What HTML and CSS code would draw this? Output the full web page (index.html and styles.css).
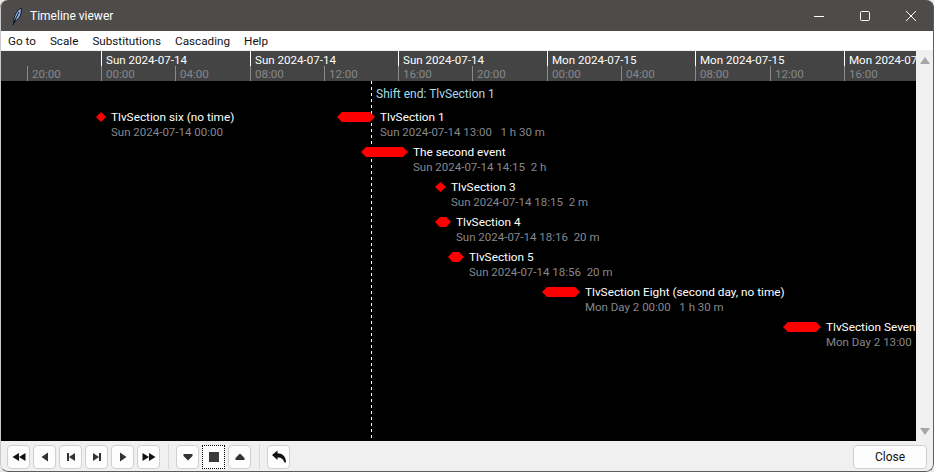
FILE: index.html
```html
<!DOCTYPE html>
<html lang="en">
<head>
<meta charset="UTF-8">
<meta name="viewport" content="width=device-width, initial-scale=1.0">
<title>Timeline viewer</title>
<link rel="stylesheet" href="styles.css">
</head>
<body>
<div class="window">
    <div class="titlebar">
        <svg class="app-icon" width="16" height="20" viewBox="0 0 16 20">
            <path d="M5 17 C4 12 7 5 12 2 C13 7 11 13 6 15 Z" fill="#8fb8ee" stroke="#10141c" stroke-width="1"/>
            <path d="M4 19 L6.5 13 L10 6" fill="none" stroke="#0b0d12" stroke-width="1"/>
        </svg>
        <span class="title">Timeline viewer</span>
        <div class="winbuttons">
            <svg width="12" height="12" viewBox="0 0 12 12"><path d="M1 6.5 H11" stroke="#fff" stroke-width="1"/></svg>
            <svg width="12" height="12" viewBox="0 0 12 12"><rect x="1.5" y="1.5" width="9" height="9" rx="1" fill="none" stroke="#fff" stroke-width="1"/></svg>
            <svg width="12" height="12" viewBox="0 0 12 12"><path d="M1 1 L11 11 M11 1 L1 11" stroke="#fff" stroke-width="1"/></svg>
        </div>
    </div>

    <div class="menubar">
        <span>Go to</span>
        <span>Scale</span>
        <span>Substitutions</span>
        <span>Cascading</span>
        <span>Help</span>
    </div>

    <div class="main">
        <div class="viewer">
            <div class="ruler">
                <div class="tick" style="left: 27px"><span>20:00</span></div>
                <div class="tick" style="left: 101px"><b>Sun 2024-07-14</b><span>00:00</span></div>
                <div class="tick" style="left: 175px"><span>04:00</span></div>
                <div class="tick" style="left: 250px"><b>Sun 2024-07-14</b><span>08:00</span></div>
                <div class="tick" style="left: 324px"><span>12:00</span></div>
                <div class="tick" style="left: 398px"><b>Sun 2024-07-14</b><span>16:00</span></div>
                <div class="tick" style="left: 472px"><span>20:00</span></div>
                <div class="tick" style="left: 547px"><b>Mon 2024-07-15</b><span>00:00</span></div>
                <div class="tick" style="left: 621px"><span>04:00</span></div>
                <div class="tick" style="left: 695px"><b>Mon 2024-07-15</b><span>08:00</span></div>
                <div class="tick" style="left: 770px"><span>12:00</span></div>
                <div class="tick" style="left: 844px"><b>Mon 2024-07-15</b><span>16:00</span></div>
            </div>
            <div class="canvas">
                <div class="now-line"></div>
                <div class="shift-label">Shift end: TlvSection 1</div>

                <div class="event" style="left: 96px; top: 28px">
                    <i class="mark" style="width: 10px"></i>
                    <div class="text"><p>TlvSection six (no time)</p><small>Sun 2024-07-14 00:00</small></div>
                </div>
                <div class="event" style="left: 337px; top: 28px">
                    <i class="mark long" style="width: 38px"></i>
                    <div class="text"><p>TlvSection 1</p><small>Sun 2024-07-14 13:00 &nbsp; 1 h 30 m</small></div>
                </div>
                <div class="event" style="left: 361px; top: 63px">
                    <i class="mark long" style="width: 47px"></i>
                    <div class="text"><p>The second event</p><small>Sun 2024-07-14 14:15 &nbsp;2 h</small></div>
                </div>
                <div class="event" style="left: 435px; top: 98px">
                    <i class="mark" style="width: 11px"></i>
                    <div class="text"><p>TlvSection 3</p><small>Sun 2024-07-14 18:15 &nbsp;2 m</small></div>
                </div>
                <div class="event" style="left: 435px; top: 133px">
                    <i class="mark mid" style="width: 16px"></i>
                    <div class="text"><p>TlvSection 4</p><small>Sun 2024-07-14 18:16 &nbsp;20 m</small></div>
                </div>
                <div class="event" style="left: 448px; top: 168px">
                    <i class="mark mid" style="width: 16px"></i>
                    <div class="text"><p>TlvSection 5</p><small>Sun 2024-07-14 18:56 &nbsp;20 m</small></div>
                </div>
                <div class="event" style="left: 542px; top: 203px">
                    <i class="mark long" style="width: 38px"></i>
                    <div class="text"><p>TlvSection Eight (second day, no time)</p><small>Mon Day 2 00:00 &nbsp; 1 h 30 m</small></div>
                </div>
                <div class="event" style="left: 783px; top: 238px">
                    <i class="mark long" style="width: 38px"></i>
                    <div class="text"><p>TlvSection Seven</p><small>Mon Day 2 13:00</small></div>
                </div>
            </div>
        </div>
        <div class="scrollbar">
            <svg width="10" height="7" viewBox="0 0 10 7"><path d="M5 0 L10 7 H0 Z" fill="#a6a6a6"/></svg>
            <svg width="10" height="7" viewBox="0 0 10 7"><path d="M0 0 H10 L5 7 Z" fill="#a6a6a6"/></svg>
        </div>
    </div>

    <div class="toolbar">
        <div class="tools">
            <button class="tool"><svg width="16" height="16" viewBox="0 0 16 16"><path d="M8 4 V12 L1.5 8 Z M14.5 4 V12 L8 8 Z" fill="#111"/></svg></button>
            <button class="tool"><svg width="16" height="16" viewBox="0 0 16 16"><path d="M11 3.5 V12.5 L4.5 8 Z" fill="#333"/></svg></button>
            <button class="tool"><svg width="16" height="16" viewBox="0 0 16 16"><path d="M4 4 H6 V12 H4 Z M12 4 V12 L6 8 Z" fill="#333"/></svg></button>
            <button class="tool"><svg width="16" height="16" viewBox="0 0 16 16"><path d="M4 4 V12 L10 8 Z M10 4 H12 V12 H10 Z" fill="#333"/></svg></button>
            <button class="tool"><svg width="16" height="16" viewBox="0 0 16 16"><path d="M5 3.5 V12.5 L11.5 8 Z" fill="#333"/></svg></button>
            <button class="tool"><svg width="16" height="16" viewBox="0 0 16 16"><path d="M1.5 4 V12 L8 8 Z M8 4 V12 L14.5 8 Z" fill="#111"/></svg></button>
        </div>
        <div class="sep"></div>
        <div class="tools">
            <button class="tool"><svg width="16" height="16" viewBox="0 0 16 16"><path d="M3.5 5 H12.5 V7 L8 11.5 L3.5 7 Z" fill="#333"/></svg></button>
            <button class="tool focus"><svg width="16" height="16" viewBox="0 0 16 16"><rect x="3" y="3" width="10" height="10" fill="#3a3a3a"/></svg></button>
            <button class="tool"><svg width="16" height="16" viewBox="0 0 16 16"><path d="M3.5 11 H12.5 V9 L8 4.5 L3.5 9 Z" fill="#333"/></svg></button>
        </div>
        <div class="sep"></div>
        <button class="tool"><svg width="16" height="16" viewBox="0 0 16 16"><path d="M1 6 L6.5 1.5 V4.2 C11 4.2 15 7 15 13.5 H13.5 C12.5 10.5 10.5 8.5 6.5 8.5 V11 Z" fill="#111"/></svg></button>
        <button class="close">Close</button>
    </div>
</div>
</body>
</html>
```

FILE: styles.css
```css
html,
body {
    margin: 0;
    padding: 0;
    height: 100%;
    background-color: #e8e8e8;
}

body {
    font-family: Roboto, "Noto Sans", sans-serif;
    font-size: 12px;
    overflow: hidden;
}

.window {
    width: 934px;
    height: 472px;
    position: relative;
    display: flex;
    flex-direction: column;
    background-color: #f0f0f0;
    border-radius: 8px;
    overflow: hidden;
}

.window::after {
    content: "";
    position: absolute;
    inset: 0;
    border: 1px solid #5c5c5a;
    border-left-color: #c8c8c8;
    border-top: none;
    border-radius: 8px;
    pointer-events: none;
}

.titlebar {
    height: 31px;
    flex: none;
    display: flex;
    align-items: center;
    padding-left: 9px;
    background-color: #4d4c4a;
    color: #fff;
}

.app-icon {
    margin-right: 5px;
}

.title {
    flex: 1;
}

.winbuttons {
    display: flex;
}

.winbuttons svg {
    margin: 0 17px;
}

.menubar {
    height: 19px;
    flex: none;
    display: flex;
    align-items: center;
    gap: 14px;
    padding-left: 8px;
    background-color: #fff;
    color: #111;
    font-size: 11.7px;
}

.main {
    height: 391px;
    flex: none;
    display: flex;
    padding-top: 1px;
    box-sizing: border-box;
}

.viewer {
    flex: 1;
    display: flex;
    flex-direction: column;
    overflow: hidden;
}

.ruler {
    height: 30px;
    flex: none;
    position: relative;
    background-color: #444;
    overflow: hidden;
}

.tick {
    position: absolute;
    bottom: 0;
    white-space: nowrap;
    font-size: 11.6px;
}

.tick b,
.tick span {
    display: block;
    padding-left: 4px;
    font-weight: normal;
}

.tick b {
    color: #fff;
    border-left: 1px solid #fff;
    padding-top: 3px;
    line-height: 12px;
}

.tick span {
    color: #85888c;
    border-left: 1px solid #8a8a8a;
    padding-top: 2px;
    line-height: 13px;
}

.canvas {
    flex: 1;
    position: relative;
    background-color: #000;
    overflow: hidden;
}

.now-line {
    position: absolute;
    left: 371px;
    top: 0;
    bottom: 0;
    width: 1px;
    background: repeating-linear-gradient(#fff 0 3px, transparent 3px 6px);
}

.shift-label {
    position: absolute;
    left: 376px;
    top: 6px;
    color: #a8dce8;
    white-space: nowrap;
}

.event {
    position: absolute;
    display: flex;
    gap: 5px;
    white-space: nowrap;
}

.mark {
    display: block;
    height: 10px;
    margin-top: 3px;
    flex: none;
    background-color: #f00;
    clip-path: polygon(50% 0, 100% 50%, 50% 100%, 0 50%);
}

.mark.mid {
    clip-path: polygon(30% 0, 70% 0, 100% 50%, 70% 100%, 30% 100%, 0 50%);
}

.mark.long {
    clip-path: polygon(5px 0, calc(100% - 5px) 0, 100% 50%, calc(100% - 5px) 100%, 5px 100%, 0 50%);
}

.text p {
    margin: 0;
    color: #fff;
    font-size: 11.8px;
    line-height: 16px;
}

.text small {
    display: block;
    font-size: 11.5px;
    color: #85888c;
    line-height: 15px;
}

.scrollbar {
    width: 18px;
    flex: none;
    display: flex;
    flex-direction: column;
    justify-content: space-between;
    align-items: center;
    padding: 6px 0;
    box-sizing: border-box;
    background-color: #f0f0f0;
}

.scrollbar svg {
    display: block;
}

.toolbar {
    flex: 1;
    display: flex;
    align-items: center;
    gap: 8px;
    padding: 0 7px;
    background-color: #f0f0f0;
}

.tools {
    display: flex;
    gap: 3px;
}

.tool {
    width: 23px;
    height: 24px;
    padding: 0;
    display: flex;
    align-items: center;
    justify-content: center;
    background-color: #fdfdfd;
    border: 1px solid #d0d0d0;
    border-radius: 4px;
}

.tool.focus {
    border: 1px dotted #000;
    border-radius: 0;
}

.sep {
    width: 1px;
    height: 25px;
    margin-right: -1px;
    background-color: #d8d8d8;
}

.close {
    margin-left: auto;
    width: 74px;
    height: 24px;
    padding: 0;
    font-family: inherit;
    font-size: 12px;
    color: #111;
    background-color: #fdfdfd;
    border: 1px solid #d0d0d0;
    border-radius: 4px;
}
```
